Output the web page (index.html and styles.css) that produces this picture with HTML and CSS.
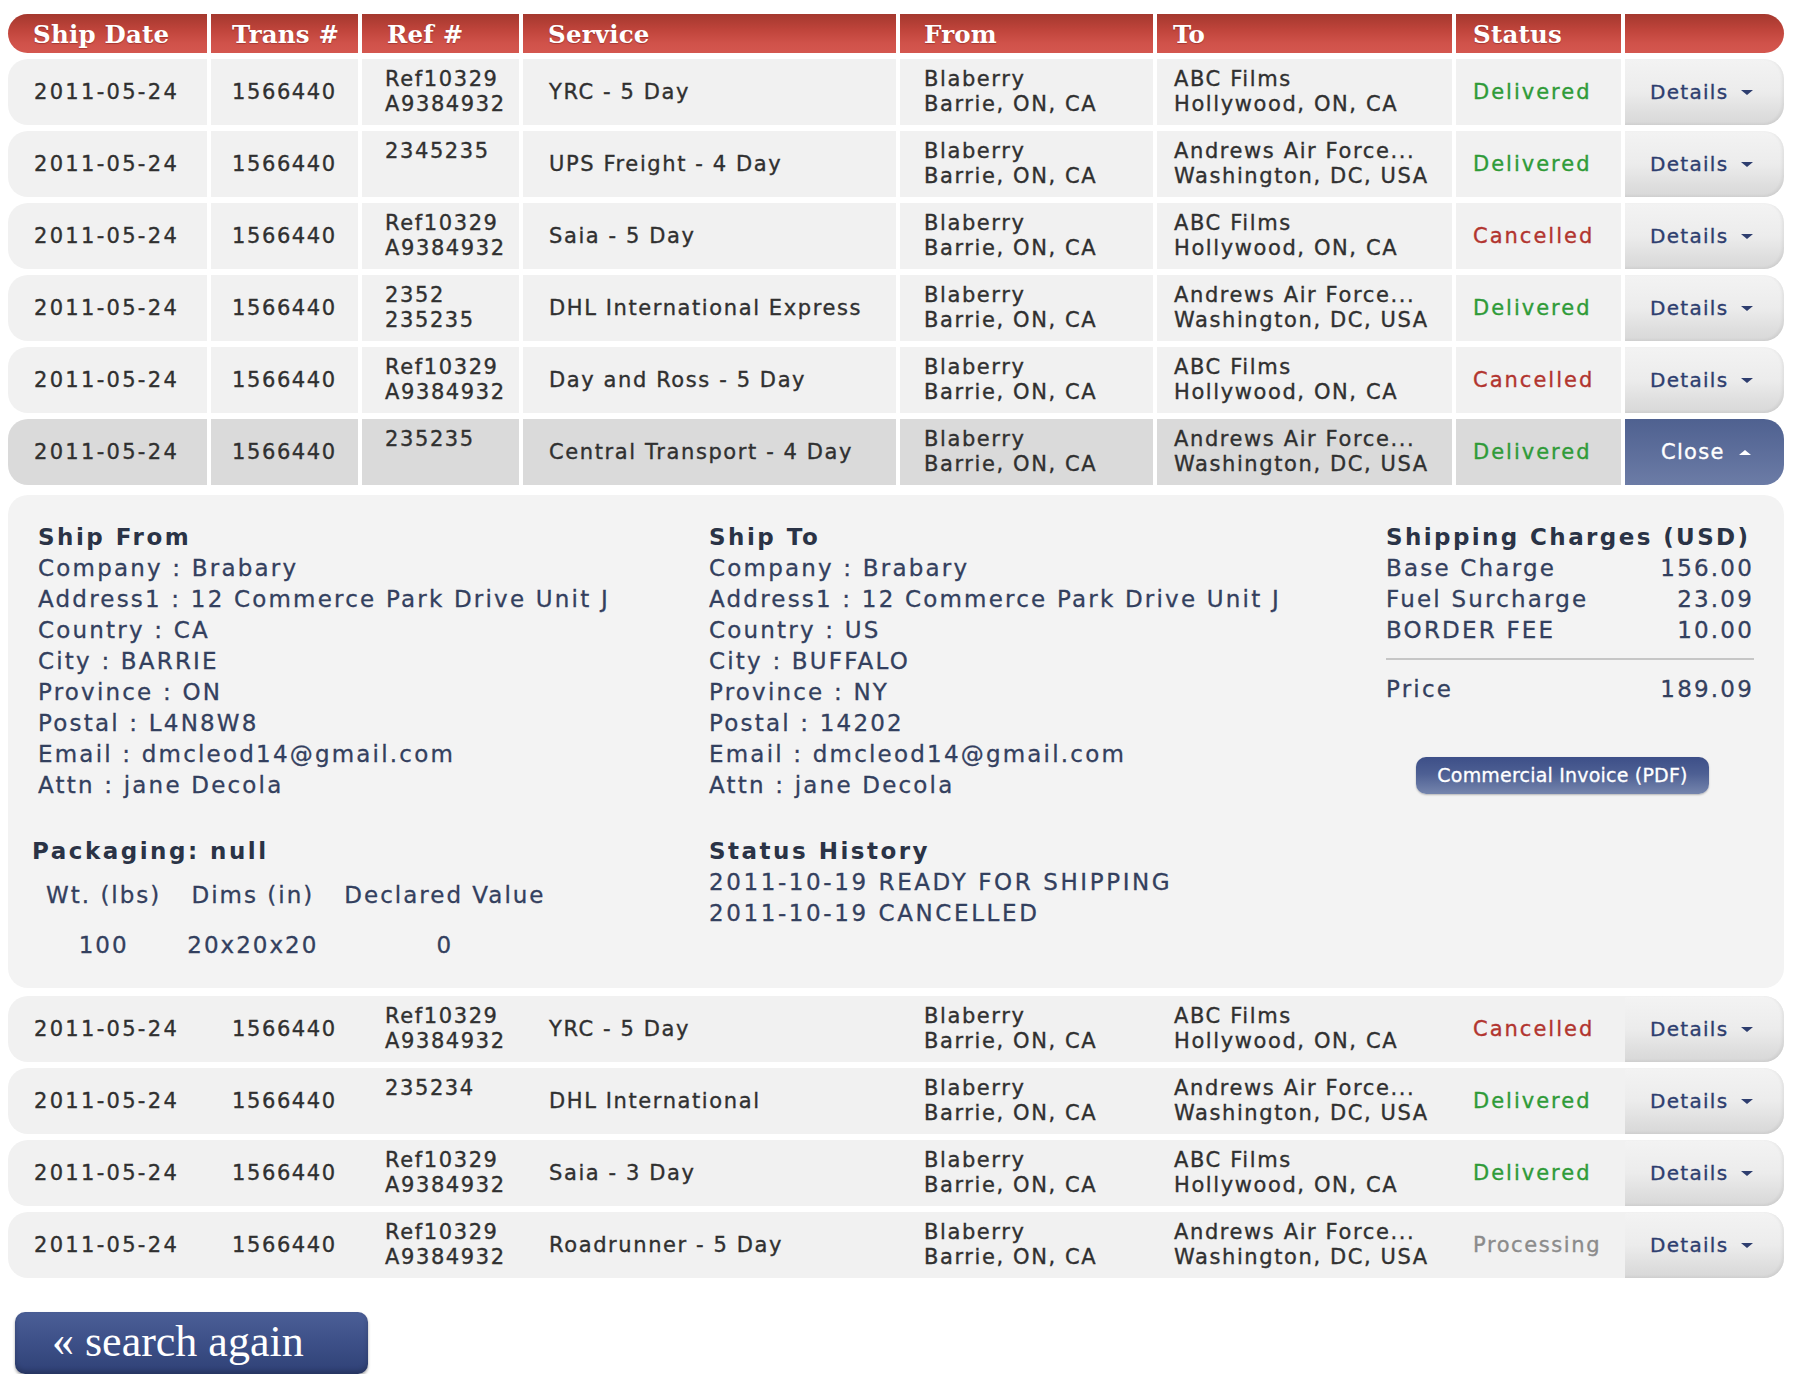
FILE: index.html
```html
<!DOCTYPE html>
<html>
<head>
<meta charset="utf-8">
<link rel="stylesheet" href="styles.css">
</head>
<body>
<div class="page">
  <div class="grid hdr">
    <div>Ship Date</div><div>Trans #</div><div>Ref #</div><div>Service</div><div>From</div><div>To</div><div>Status</div><div></div>
  </div>

  <div class="grid row">
    <div>2011-05-24</div><div>1566440</div>
    <div class="two"><span>Ref10329</span><span>A9384932</span></div>
    <div>YRC - 5 Day</div>
    <div class="two"><span>Blaberry</span><span>Barrie, ON, CA</span></div>
    <div class="two"><span>ABC Films</span><span>Hollywood, ON, CA</span></div>
    <div class="ok">Delivered</div>
    <div class="act"><span>Details</span><i class="down"></i></div>
  </div>

  <div class="grid row">
    <div>2011-05-24</div><div>1566440</div>
    <div class="two"><span>2345235</span><span>&nbsp;</span></div>
    <div>UPS Freight - 4 Day</div>
    <div class="two"><span>Blaberry</span><span>Barrie, ON, CA</span></div>
    <div class="two"><span>Andrews Air Force...</span><span>Washington, DC, USA</span></div>
    <div class="ok">Delivered</div>
    <div class="act"><span>Details</span><i class="down"></i></div>
  </div>

  <div class="grid row">
    <div>2011-05-24</div><div>1566440</div>
    <div class="two"><span>Ref10329</span><span>A9384932</span></div>
    <div>Saia - 5 Day</div>
    <div class="two"><span>Blaberry</span><span>Barrie, ON, CA</span></div>
    <div class="two"><span>ABC Films</span><span>Hollywood, ON, CA</span></div>
    <div class="bad">Cancelled</div>
    <div class="act"><span>Details</span><i class="down"></i></div>
  </div>

  <div class="grid row">
    <div>2011-05-24</div><div>1566440</div>
    <div class="two"><span>2352</span><span>235235</span></div>
    <div>DHL International Express</div>
    <div class="two"><span>Blaberry</span><span>Barrie, ON, CA</span></div>
    <div class="two"><span>Andrews Air Force...</span><span>Washington, DC, USA</span></div>
    <div class="ok">Delivered</div>
    <div class="act"><span>Details</span><i class="down"></i></div>
  </div>

  <div class="grid row">
    <div>2011-05-24</div><div>1566440</div>
    <div class="two"><span>Ref10329</span><span>A9384932</span></div>
    <div>Day and Ross - 5 Day</div>
    <div class="two"><span>Blaberry</span><span>Barrie, ON, CA</span></div>
    <div class="two"><span>ABC Films</span><span>Hollywood, ON, CA</span></div>
    <div class="bad">Cancelled</div>
    <div class="act"><span>Details</span><i class="down"></i></div>
  </div>

  <div class="grid row sel">
    <div>2011-05-24</div><div>1566440</div>
    <div class="two"><span>235235</span><span>&nbsp;</span></div>
    <div>Central Transport - 4 Day</div>
    <div class="two"><span>Blaberry</span><span>Barrie, ON, CA</span></div>
    <div class="two"><span>Andrews Air Force...</span><span>Washington, DC, USA</span></div>
    <div class="ok">Delivered</div>
    <div class="act close"><span>Close</span><i class="up"></i></div>
  </div>

  <div class="panel">
    <div class="col">
      <div class="h">Ship From</div>
      <div>Company : Brabary</div>
      <div>Address1 : 12 Commerce Park Drive Unit J</div>
      <div>Country : CA</div>
      <div>City : BARRIE</div>
      <div>Province : ON</div>
      <div>Postal : L4N8W8</div>
      <div>Email : dmcleod14@gmail.com</div>
      <div>Attn : jane Decola</div>
    </div>
    <div class="col">
      <div class="h">Ship To</div>
      <div>Company : Brabary</div>
      <div>Address1 : 12 Commerce Park Drive Unit J</div>
      <div>Country : US</div>
      <div>City : BUFFALO</div>
      <div>Province : NY</div>
      <div>Postal : 14202</div>
      <div>Email : dmcleod14@gmail.com</div>
      <div>Attn : jane Decola</div>
    </div>
    <div class="col charges">
      <div class="h">Shipping Charges (USD)</div>
      <div class="line"><span>Base Charge</span><span>156.00</span></div>
      <div class="line"><span>Fuel Surcharge</span><span>23.09</span></div>
      <div class="line"><span>BORDER FEE</span><span>10.00</span></div>
      <div class="rule"></div>
      <div class="line"><span>Price</span><span>189.09</span></div>
      <div class="invoice">Commercial Invoice (PDF)</div>
    </div>
    <div class="col pack">
      <div class="h">Packaging: null</div>
      <table class="ptable">
        <tr><td>Wt. (lbs)</td><td>Dims (in)</td><td>Declared Value</td></tr>
        <tr><td>100</td><td>20x20x20</td><td>0</td></tr>
      </table>
    </div>
    <div class="col hist">
      <div class="h">Status History</div>
      <div>2011-10-19 READY FOR SHIPPING</div>
      <div>2011-10-19 CANCELLED</div>
    </div>
  </div>

  <div class="grid row plain first">
    <div>2011-05-24</div><div>1566440</div>
    <div class="two"><span>Ref10329</span><span>A9384932</span></div>
    <div>YRC - 5 Day</div>
    <div class="two"><span>Blaberry</span><span>Barrie, ON, CA</span></div>
    <div class="two"><span>ABC Films</span><span>Hollywood, ON, CA</span></div>
    <div class="bad">Cancelled</div>
    <div class="act"><span>Details</span><i class="down"></i></div>
  </div>

  <div class="grid row plain">
    <div>2011-05-24</div><div>1566440</div>
    <div class="two"><span>235234</span><span>&nbsp;</span></div>
    <div>DHL International</div>
    <div class="two"><span>Blaberry</span><span>Barrie, ON, CA</span></div>
    <div class="two"><span>Andrews Air Force...</span><span>Washington, DC, USA</span></div>
    <div class="ok">Delivered</div>
    <div class="act"><span>Details</span><i class="down"></i></div>
  </div>

  <div class="grid row plain">
    <div>2011-05-24</div><div>1566440</div>
    <div class="two"><span>Ref10329</span><span>A9384932</span></div>
    <div>Saia - 3 Day</div>
    <div class="two"><span>Blaberry</span><span>Barrie, ON, CA</span></div>
    <div class="two"><span>ABC Films</span><span>Hollywood, ON, CA</span></div>
    <div class="ok">Delivered</div>
    <div class="act"><span>Details</span><i class="down"></i></div>
  </div>

  <div class="grid row plain">
    <div>2011-05-24</div><div>1566440</div>
    <div class="two"><span>Ref10329</span><span>A9384932</span></div>
    <div>Roadrunner - 5 Day</div>
    <div class="two"><span>Blaberry</span><span>Barrie, ON, CA</span></div>
    <div class="two"><span>Andrews Air Force...</span><span>Washington, DC, USA</span></div>
    <div class="proc">Processing</div>
    <div class="act"><span>Details</span><i class="down"></i></div>
  </div>

  <div class="search">&laquo; search again</div>
</div>
</body>
</html>
```

FILE: styles.css
```css
html, body {
  margin: 0;
  padding: 0;
  background: #ffffff;
}

body {
  font-family: "DejaVu Sans", Verdana, sans-serif;
}

.page {
  width: 1776px;
  padding: 14px 0 0 8px;
}

.grid {
  display: grid;
  grid-template-columns: 199px 147px 157px 373px 253px 295px 165px 159px;
  column-gap: 4px;
}

/* header */
.hdr {
  height: 39px;
}

.hdr > div {
  background: linear-gradient(#a4382e 0%, #bf443b 40%, #d0524a 75%, #d4574f 100%);
  color: #ffffff;
  font-family: "DejaVu Serif", "Liberation Serif", serif;
  font-weight: bold;
  font-size: 24.5px;
  letter-spacing: 0.2px;
  display: flex;
  align-items: center;
  padding-top: 1px;
  text-shadow: 0 1px 1px rgba(80, 10, 10, 0.35);
}

.hdr > div:first-child { border-radius: 20px 0 0 20px; }
.hdr > div:last-child { border-radius: 0 20px 20px 0; }

/* column paddings */
.grid > div:nth-child(1) { padding-left: 26px; }
.grid > div:nth-child(2) { padding-left: 21px; }
.grid > div:nth-child(3) { padding-left: 23px; }
.grid > div:nth-child(4) { padding-left: 26px; }
.grid > div:nth-child(5) { padding-left: 24px; }
.grid > div:nth-child(6) { padding-left: 17px; }
.grid > div:nth-child(7) { padding-left: 17px; }
.grid > div:nth-child(8) { padding-left: 25px; }

.hdr > div:nth-child(1) { padding-left: 25px; }
.hdr > div:nth-child(3) { padding-left: 25px; }
.hdr > div:nth-child(4) { padding-left: 25px; }
.hdr > div:nth-child(6) { padding-left: 16px; }

/* rows */
.row {
  height: 66px;
  margin-top: 6px;
}

.row > div {
  background: #f1f1f1;
  display: flex;
  align-items: center;
  color: #303030;
  font-size: 21px;
  letter-spacing: 1.6px;
  line-height: 25px;
  white-space: nowrap;
  -webkit-text-stroke: 0.35px currentColor;
}

.row > div:first-child {
  border-radius: 20px 0 0 20px;
  letter-spacing: 2.3px;
}
.row > div:last-child { border-radius: 0 20px 20px 0; }

.row > .two {
  flex-direction: column;
  align-items: flex-start;
  justify-content: center;
}

.row.sel > div {
  background: #dadada;
}

.row.plain {
  background: #f1f1f1;
  border-radius: 20px;
}

.row.plain > div {
  background: transparent;
}

.row.plain.first {
  margin-top: 8px;
}

.row > .ok { color: #2f9b38; letter-spacing: 2px; }
.row > .bad { color: #b2352f; letter-spacing: 2px; }
.row > .proc { color: #8b8b8b; letter-spacing: 1.6px; }

.row > .act,
.row.plain > .act {
  background: linear-gradient(#f3f3f3 0%, #ececec 50%, #dddddd 85%, #d8d8d8 100%);
  color: #2e3e6f;
  font-size: 20px;
  letter-spacing: 1.3px;
  box-shadow: inset -2px -1px 3px rgba(0, 0, 0, 0.06);
}

.row.sel > .act.close {
  background: linear-gradient(#4f6190 0%, #5d6e9b 50%, #6c7ca6 100%);
  color: #ffffff;
  font-size: 21px;
  padding-left: 36px;
  box-shadow: none;
}

.down, .up {
  display: inline-block;
  width: 0;
  height: 0;
  margin-left: 13px;
  border-left: 6px solid transparent;
  border-right: 6px solid transparent;
}

.down {
  border-top: 5px solid #2e3e6f;
}

.up {
  border-bottom: 5px solid #ffffff;
  margin-left: 14px;
}

/* details panel */
.panel {
  margin-top: 10px;
  background: #f3f3f3;
  border-radius: 20px;
  padding: 27px 28px 18px 30px;
  display: grid;
  grid-template-columns: 671px 677px 368px;
  color: #33405e;
  font-size: 23px;
  line-height: 31px;
  letter-spacing: 2.2px;
  white-space: nowrap;
  -webkit-text-stroke: 0.3px currentColor;
}

.panel .h {
  font-weight: bold;
  color: #2a3346;
  letter-spacing: 2.5px;
  -webkit-text-stroke: 0;
}

.charges .h {
  letter-spacing: 2.4px;
}

.line {
  display: flex;
  justify-content: space-between;
}

.rule {
  height: 2px;
  background: #c6c6c6;
  margin: 12px 0 14px 0;
}

.invoice {
  margin: 52px 0 0 30px;
  width: 293px;
  height: 37px;
  border-radius: 10px;
  background: linear-gradient(#3d4f88 0%, #4d5f93 45%, #7585ad 100%);
  color: #ffffff;
  font-size: 19px;
  letter-spacing: 0.2px;
  line-height: 37px;
  text-align: center;
  box-shadow: 0 1px 2px rgba(0, 0, 0, 0.25);
}

.hist > div {
  letter-spacing: 2.6px;
}

.pack, .hist {
  margin-top: 35px;
}

.pack {
  margin-left: -6px;
}

.ptable {
  border-collapse: collapse;
  margin-top: 3px;
  margin-left: 1px;
}

.ptable td {
  padding: 0 13px;
  height: 50px;
  text-align: center;
  font-size: 23px;
  letter-spacing: 2px;
}

/* search again */
.search {
  margin: 34px 0 0 7px;
  width: 316px;
  height: 62px;
  padding-left: 37px;
  border-radius: 10px;
  background: linear-gradient(#4b5f97 0%, #3e5189 45%, #2f4176 100%);
  box-shadow: 0 2px 3px rgba(0, 0, 0, 0.35), inset 0 -3px 5px rgba(0, 0, 0, 0.2);
  color: #ffffff;
  font-family: "Liberation Serif", "DejaVu Serif", serif;
  font-size: 44px;
  line-height: 60px;
}
```
